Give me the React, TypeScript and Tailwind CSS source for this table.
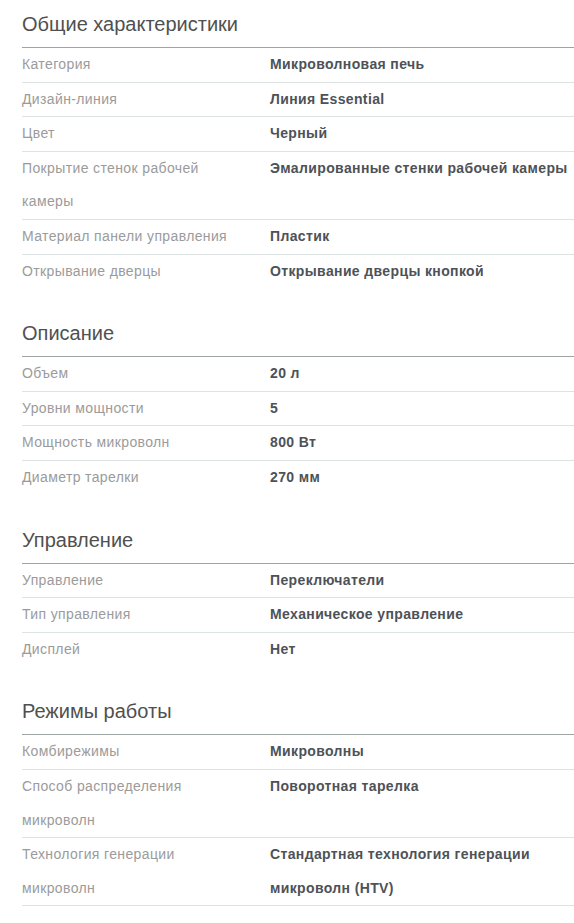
import React from "react";

type Row = { label: string; value: string };
type Section = { title: string; rows: Row[]; lastBorder?: boolean };

const sections: Section[] = [
  {
    title: "Общие характеристики",
    rows: [
      { label: "Категория", value: "Микроволновая печь" },
      { label: "Дизайн-линия", value: "Линия Essential" },
      { label: "Цвет", value: "Черный" },
      { label: "Покрытие стенок рабочей камеры", value: "Эмалированные стенки рабочей камеры" },
      { label: "Материал панели управления", value: "Пластик" },
      { label: "Открывание дверцы", value: "Открывание дверцы кнопкой" },
    ],
  },
  {
    title: "Описание",
    rows: [
      { label: "Объем", value: "20 л" },
      { label: "Уровни мощности", value: "5" },
      { label: "Мощность микроволн", value: "800 Вт" },
      { label: "Диаметр тарелки", value: "270 мм" },
    ],
  },
  {
    title: "Управление",
    rows: [
      { label: "Управление", value: "Переключатели" },
      { label: "Тип управления", value: "Механическое управление" },
      { label: "Дисплей", value: "Нет" },
    ],
  },
  {
    title: "Режимы работы",
    lastBorder: true,
    rows: [
      { label: "Комбирежимы", value: "Микроволны" },
      { label: "Способ распределения микроволн", value: "Поворотная тарелка" },
      { label: "Технология генерации микроволн", value: "Стандартная технология генерации микроволн (HTV)" },
    ],
  },
];

export default function App() {
  return (
    <div
      className="min-h-[923px] bg-white pl-[22px]"
      style={{ fontFamily: '"Liberation Sans", Arial, sans-serif' }}
    >
      {sections.map((s, si) => (
        <div key={s.title} className={si === 0 ? "" : "mt-[21px]"}>
          <div className="h-[48px] border-b border-[#9ea3a3] pt-[10px] text-[20px] leading-[28px] text-[#505050]">
            {s.title}
          </div>
          {s.rows.map((r, ri) => {
            const last = ri === s.rows.length - 1;
            return (
              <div
                key={r.label}
                className={
                  "flex text-[14px] leading-[33.6px] tracking-[0.37px] " +
                  (!last || s.lastBorder ? "border-b border-[#dde2e2]" : "")
                }
              >
                <div className="w-[248px] shrink-0 pr-[24px] text-[#9b9b9b]">{r.label}</div>
                <div className="flex-1 font-bold text-[#4d5257]">{r.value}</div>
              </div>
            );
          })}
        </div>
      ))}
    </div>
  );
}
